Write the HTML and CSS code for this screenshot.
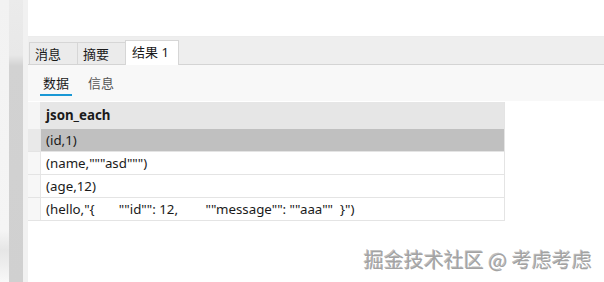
FILE: index.html
```html
<!DOCTYPE html>
<html>
<head>
<meta charset="utf-8">
<link rel="stylesheet" href="styles.css">
</head>
<body>
<div class="screen">
  <div class="side">
    <div class="side-a"></div>
    <div class="side-band"></div>
    <div class="side-b"></div>
  </div>
  <div class="main">
    <div class="top"></div>
    <div class="tabbar">
      <div class="tab">消息</div>
      <div class="tab">摘要</div>
      <div class="tab active">结果 1</div>
    </div>
    <div class="content">
      <div class="subtabs">
        <div class="subtab on">数据</div>
        <div class="subtab">信息</div>
      </div>
      <div class="grid">
        <div class="grow head"><div class="rh"></div><div class="cell">json_each</div></div>
        <div class="grow sel"><div class="rh"></div><div class="cell">(id,1)</div></div>
        <div class="grow"><div class="rh"></div><div class="cell">(name,"""asd""")</div></div>
        <div class="grow"><div class="rh"></div><div class="cell">(age,12)</div></div>
        <div class="grow"><div class="rh"></div><div class="cell pre">(hello,"{       ""id"": 12,        ""message"": ""aaa""  }")</div></div>
      </div>
    </div>
  </div>
  <div class="watermark">掘金技术社区 @ 考虑考虑</div>
</div>
</body>
</html>
```
FILE: styles.css
```css
html, body {
  margin: 0;
  padding: 0;
  background: #ffffff;
}
.screen {
  position: relative;
  width: 604px;
  height: 282px;
  display: flex;
  overflow: hidden;
  font-family: "Noto Sans", "Noto Sans CJK SC", sans-serif;
  color: #1a1a1a;
}
.side {
  width: 28px;
  display: flex;
  flex-shrink: 0;
  background: linear-gradient(#f0f0f0, #f6f6f6);
}
.side-a {
  width: 9px;
  background: linear-gradient(#f2f2f2 0px, #f5f5f5 230px, #e6e6e6 250px, #eeeeee 265px, #f8f8f8 282px);
}
.side-band {
  width: 14px;
  background: linear-gradient(#ebebeb 0px, #e8e8e8 55px, #d2d2d2 66px, #d0d0d0 282px);
}
.side-b {
  width: 5px;
  background: #f1f1f1;
}
.main {
  flex: 1;
  display: flex;
  flex-direction: column;
}
.top {
  height: 36px;
  background: #ffffff;
  border-bottom: 1px solid #ececec;
}
.tabbar {
  height: 27px;
  background: #eeeeee;
  border-bottom: 1px solid #d4d4d4;
  display: flex;
  align-items: flex-end;
  padding-left: 1px;
}
.tab {
  height: 21px;
  box-sizing: content-box;
  border: 1px solid #d6d6d6;
  border-bottom: none;
  margin-right: -1px;
  background: #ebebeb;
  font-size: 13px;
  line-height: 23px;
  padding: 0 0 0 5px;
  width: 42px;
  color: #1a1a1a;
}
.tab.active {
  height: 24px;
  margin-bottom: -1px;
  background: #ffffff;
  width: 46px;
  padding-left: 6px;
  line-height: 22px;
  position: relative;
  z-index: 1;
}
.content {
  flex: 1;
  background: #f8f8f8;
  display: flex;
  flex-direction: column;
}
.subtabs {
  height: 36px;
  display: flex;
  gap: 13px;
  padding-left: 12px;
  align-items: flex-start;
  box-sizing: border-box;
  padding-top: 9px;
}
.subtab {
  font-size: 13px;
  line-height: 19px;
  padding: 0 3px 1px;
  color: #555;
  border-bottom: 2px solid transparent;
}
.subtab.on {
  color: #1a1a1a;
  border-bottom-color: #1a98d5;
}
.grid {
  flex: 1;
  background: #ffffff;
  padding-top: 1px;
}
.grow {
  display: flex;
  height: 23px;
  box-sizing: border-box;
  border-bottom: 1px solid #e4e4e4;
  width: 477px;
}
.rh {
  width: 12px;
  flex-shrink: 0;
  background: #f7f7f7;
  border-right: 1px solid #e6e6e6;
}
.cell {
  flex: 1;
  font-size: 13.3px;
  line-height: 22px;
  padding-left: 5px;
  border-right: 1px solid #e4e4e4;
  white-space: nowrap;
  overflow: hidden;
}
.pre {
  white-space: pre;
}
.head {
  height: 27px;
  border-bottom: none;
}
.head .rh {
  background: #f5f5f5;
}
.head .cell {
  background: #e6e6e6;
  font-weight: bold;
  line-height: 26px;
}
.sel .rh {
  background: #e9e9e9;
}
.sel .cell {
  background: #c0c0c0;
}
.watermark {
  position: absolute;
  right: 12px;
  bottom: 10px;
  font-family: "Noto Sans CJK SC", "Noto Sans", sans-serif;
  font-size: 20px;
  line-height: 24px;
  color: #a3a3a3;
  text-shadow: 1px 1px 0 #ffffff, -1px -1px 0 rgba(90, 90, 90, 0.4);
}
```
